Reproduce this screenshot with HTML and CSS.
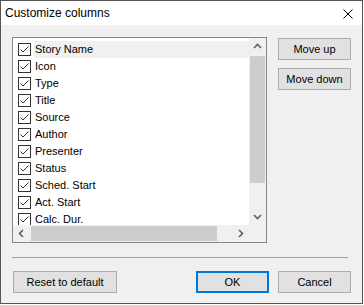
FILE: index.html
```html
<!DOCTYPE html>
<html lang="en">
<head>
    <meta charset="UTF-8">
    <title>Customize columns</title>
    <link rel="stylesheet" href="styles.css">
</head>
<body>
    <div class="window">
        <div class="titlebar">
            <span class="title">Customize columns</span>
            <svg class="close" width="10" height="10" viewBox="0 0 10 10">
                <path d="M0.5 0.5 L9.5 9.5 M9.5 0.5 L0.5 9.5" stroke="#000" stroke-width="1" fill="none"/>
            </svg>
        </div>
        <div class="content">
            <div class="main">
                <div class="listbox">
                    <div class="items">
                        <div class="item selected"><svg class="check" width="13" height="13" viewBox="0 0 13 13"><rect x="0.5" y="0.5" width="12" height="12" fill="#fff" stroke="#333"/><polyline points="2.5,6.5 5,9 10.5,3.5" fill="none" stroke="#333"/></svg><span class="label">Story Name</span></div>
                        <div class="item"><svg class="check" width="13" height="13" viewBox="0 0 13 13"><rect x="0.5" y="0.5" width="12" height="12" fill="#fff" stroke="#333"/><polyline points="2.5,6.5 5,9 10.5,3.5" fill="none" stroke="#333"/></svg><span class="label">Icon</span></div>
                        <div class="item"><svg class="check" width="13" height="13" viewBox="0 0 13 13"><rect x="0.5" y="0.5" width="12" height="12" fill="#fff" stroke="#333"/><polyline points="2.5,6.5 5,9 10.5,3.5" fill="none" stroke="#333"/></svg><span class="label">Type</span></div>
                        <div class="item"><svg class="check" width="13" height="13" viewBox="0 0 13 13"><rect x="0.5" y="0.5" width="12" height="12" fill="#fff" stroke="#333"/><polyline points="2.5,6.5 5,9 10.5,3.5" fill="none" stroke="#333"/></svg><span class="label">Title</span></div>
                        <div class="item"><svg class="check" width="13" height="13" viewBox="0 0 13 13"><rect x="0.5" y="0.5" width="12" height="12" fill="#fff" stroke="#333"/><polyline points="2.5,6.5 5,9 10.5,3.5" fill="none" stroke="#333"/></svg><span class="label">Source</span></div>
                        <div class="item"><svg class="check" width="13" height="13" viewBox="0 0 13 13"><rect x="0.5" y="0.5" width="12" height="12" fill="#fff" stroke="#333"/><polyline points="2.5,6.5 5,9 10.5,3.5" fill="none" stroke="#333"/></svg><span class="label">Author</span></div>
                        <div class="item"><svg class="check" width="13" height="13" viewBox="0 0 13 13"><rect x="0.5" y="0.5" width="12" height="12" fill="#fff" stroke="#333"/><polyline points="2.5,6.5 5,9 10.5,3.5" fill="none" stroke="#333"/></svg><span class="label">Presenter</span></div>
                        <div class="item"><svg class="check" width="13" height="13" viewBox="0 0 13 13"><rect x="0.5" y="0.5" width="12" height="12" fill="#fff" stroke="#333"/><polyline points="2.5,6.5 5,9 10.5,3.5" fill="none" stroke="#333"/></svg><span class="label">Status</span></div>
                        <div class="item"><svg class="check" width="13" height="13" viewBox="0 0 13 13"><rect x="0.5" y="0.5" width="12" height="12" fill="#fff" stroke="#333"/><polyline points="2.5,6.5 5,9 10.5,3.5" fill="none" stroke="#333"/></svg><span class="label">Sched. Start</span></div>
                        <div class="item"><svg class="check" width="13" height="13" viewBox="0 0 13 13"><rect x="0.5" y="0.5" width="12" height="12" fill="#fff" stroke="#333"/><polyline points="2.5,6.5 5,9 10.5,3.5" fill="none" stroke="#333"/></svg><span class="label">Act. Start</span></div>
                        <div class="item"><svg class="check" width="13" height="13" viewBox="0 0 13 13"><rect x="0.5" y="0.5" width="12" height="12" fill="#fff" stroke="#333"/><polyline points="2.5,6.5 5,9 10.5,3.5" fill="none" stroke="#333"/></svg><span class="label">Calc. Dur.</span></div>
                    </div>
                    <div class="vscroll">
                        <svg class="arrow" width="17" height="17" viewBox="0 0 17 17"><polyline points="5,10 8.5,6.5 12,10" fill="none" stroke="#606060" stroke-width="1.6"/></svg>
                        <div class="vtrack"><div class="vthumb"></div></div>
                        <svg class="arrow" width="17" height="17" viewBox="0 0 17 17"><polyline points="5,7 8.5,10.5 12,7" fill="none" stroke="#606060" stroke-width="1.6"/></svg>
                    </div>
                    <div class="hscroll">
                        <svg class="arrow" width="17" height="17" viewBox="0 0 17 17"><polyline points="10,5 6.5,8.5 10,12" fill="none" stroke="#606060" stroke-width="1.6"/></svg>
                        <div class="htrack"><div class="hthumb"></div></div>
                        <svg class="arrow" width="17" height="17" viewBox="0 0 17 17"><polyline points="7,5 10.5,8.5 7,12" fill="none" stroke="#606060" stroke-width="1.6"/></svg>
                    </div>
                    <div class="corner"></div>
                </div>
                <div class="side-buttons">
                    <button class="btn">Move up</button>
                    <button class="btn">Move down</button>
                </div>
            </div>
            <div class="separator"></div>
            <div class="footer">
                <button class="btn btn-reset">Reset to default</button>
                <div class="spacer"></div>
                <button class="btn btn-default">OK</button>
                <button class="btn btn-cancel">Cancel</button>
            </div>
        </div>
    </div>
</body>
</html>
```

FILE: styles.css
```css
body {
    margin: 0;
    background: #fff;
    font-family: 'Liberation Sans', Arial, sans-serif;
    font-size: 11px;
    color: #000;
}
.window {
    box-sizing: border-box;
    width: 363px;
    height: 304px;
    border: 1px solid #555;
    background: #f0f0f0;
    display: flex;
    flex-direction: column;
}
.titlebar {
    height: 24px;
    background: #fff;
    display: flex;
    align-items: center;
    justify-content: space-between;
    padding: 0 9px 0 4px;
}
.title {
    font-size: 12px;
}
.close {
    display: block;
    margin-top: 1px;
}
.content {
    padding: 12px 11px 0 11px;
}
.main {
    display: flex;
    gap: 11px;
}
.listbox {
    box-sizing: border-box;
    width: 255px;
    height: 206px;
    border: 1px solid #828790;
    background: #fff;
    display: grid;
    grid-template-columns: 1fr 17px;
    grid-template-rows: 1fr 17px;
}
.items {
    overflow: hidden;
    padding-top: 3px;
}
.item {
    display: flex;
    align-items: center;
    height: 17px;
    padding-left: 5px;
}
.check {
    display: block;
    flex: none;
}
.label {
    flex: 1;
    height: 17px;
    line-height: 17px;
    margin-left: 3px;
    padding-left: 1px;
    white-space: nowrap;
}
.item.selected .label {
    background: #f0f0f0;
}
.vscroll {
    background: #f0f0f0;
    display: flex;
    flex-direction: column;
}
.arrow {
    display: block;
    flex: none;
}
.vtrack {
    flex: 1;
    padding: 1px 1px 0 1px;
}
.vthumb {
    height: 127px;
    background: #cdcdcd;
}
.hscroll {
    background: #f0f0f0;
    display: flex;
}
.htrack {
    flex: 1;
    padding: 1px 0 1px 1px;
}
.hthumb {
    width: 186px;
    height: 100%;
    background: #cdcdcd;
}
.corner {
    background: #f0f0f0;
}
.side-buttons {
    display: flex;
    flex-direction: column;
    gap: 8px;
    margin-top: 1px;
}
.btn {
    box-sizing: border-box;
    width: 73px;
    height: 22px;
    padding: 0;
    background: #e1e1e1;
    border: 1px solid #adadad;
    font-family: 'Liberation Sans', Arial, sans-serif;
    font-size: 11px;
    color: #000;
}
.separator {
    margin: 14px 3px 0 0;
    border-top: 1px solid #a0a0a0;
}
.footer {
    display: flex;
    margin-top: 13px;
}
.btn-reset {
    width: 104px;
    margin-left: 1px;
}
.spacer {
    flex: 1;
}
.btn-default {
    border: 2px solid #0078d7;
}
.btn-cancel {
    margin-left: 9px;
}
```
